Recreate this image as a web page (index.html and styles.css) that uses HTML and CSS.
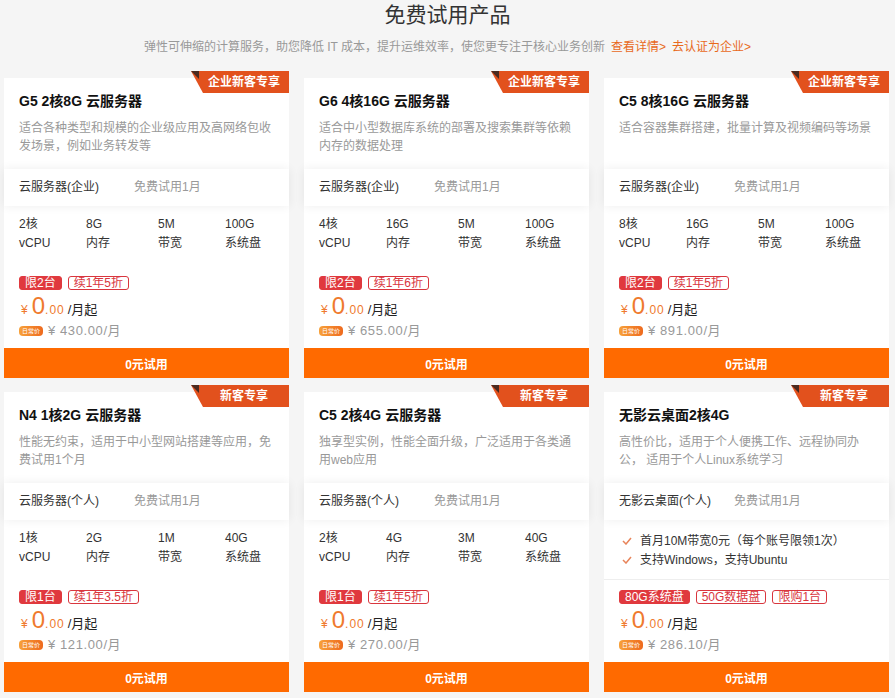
FILE: index.html
```html
<!DOCTYPE html>
<html lang="zh-CN">
<head>
  <meta charset="UTF-8" />
  <title>免费试用产品</title>
  <link rel="stylesheet" href="styles.css">
</head>
<body>
  <div class="header">
    <h1>免费试用产品</h1>
    <p class="subtitle">弹性可伸缩的计算服务，助您降低 IT 成本，提升运维效率，使您更专注于核心业务创新<a href="#">查看详情&gt;</a><a href="#">去认证为企业&gt;</a></p>
  </div>

  <div class="grid">
    <!-- row 1 -->
    <div class="card">
      <div class="badge">企业新客专享</div>
      <div class="card-head">
        <h3>G5 2核8G 云服务器</h3>
        <p class="desc">适合各种类型和规模的企业级应用及高网络包收发场景，例如业务转发等</p>
      </div>
      <div class="card-type"><span>云服务器(企业)</span><span class="trial">免费试用1月</span></div>
      <div class="card-body">
        <div class="specs">
          <span>2核</span><span>8G</span><span>5M</span><span>100G</span>
          <span>vCPU</span><span>内存</span><span>带宽</span><span>系统盘</span>
        </div>
      </div>
      <div class="card-foot">
        <div class="tags"><span class="tag fill">限2台</span><span class="tag">续1年5折</span></div>
        <div class="price"><span class="yen">¥</span><span class="num">0</span><span class="dec">.00</span><span class="unit">/月起</span></div>
        <div class="daily"><span class="daily-tag">日常价</span><span class="old">¥ 430.00/月</span></div>
        <button class="btn">0元试用</button>
      </div>
    </div>

    <div class="card">
      <div class="badge">企业新客专享</div>
      <div class="card-head">
        <h3>G6 4核16G 云服务器</h3>
        <p class="desc">适合中小型数据库系统的部署及搜索集群等依赖内存的数据处理</p>
      </div>
      <div class="card-type"><span>云服务器(企业)</span><span class="trial">免费试用1月</span></div>
      <div class="card-body">
        <div class="specs">
          <span>4核</span><span>16G</span><span>5M</span><span>100G</span>
          <span>vCPU</span><span>内存</span><span>带宽</span><span>系统盘</span>
        </div>
      </div>
      <div class="card-foot">
        <div class="tags"><span class="tag fill">限2台</span><span class="tag">续1年6折</span></div>
        <div class="price"><span class="yen">¥</span><span class="num">0</span><span class="dec">.00</span><span class="unit">/月起</span></div>
        <div class="daily"><span class="daily-tag">日常价</span><span class="old">¥ 655.00/月</span></div>
        <button class="btn">0元试用</button>
      </div>
    </div>

    <div class="card">
      <div class="badge">企业新客专享</div>
      <div class="card-head">
        <h3>C5 8核16G 云服务器</h3>
        <p class="desc">适合容器集群搭建，批量计算及视频编码等场景</p>
      </div>
      <div class="card-type"><span>云服务器(企业)</span><span class="trial">免费试用1月</span></div>
      <div class="card-body">
        <div class="specs">
          <span>8核</span><span>16G</span><span>5M</span><span>100G</span>
          <span>vCPU</span><span>内存</span><span>带宽</span><span>系统盘</span>
        </div>
      </div>
      <div class="card-foot">
        <div class="tags"><span class="tag fill">限2台</span><span class="tag">续1年5折</span></div>
        <div class="price"><span class="yen">¥</span><span class="num">0</span><span class="dec">.00</span><span class="unit">/月起</span></div>
        <div class="daily"><span class="daily-tag">日常价</span><span class="old">¥ 891.00/月</span></div>
        <button class="btn">0元试用</button>
      </div>
    </div>

    <!-- row 2 -->
    <div class="card">
      <div class="badge">新客专享</div>
      <div class="card-head">
        <h3>N4 1核2G 云服务器</h3>
        <p class="desc">性能无约束，适用于中小型网站搭建等应用，免费试用1个月</p>
      </div>
      <div class="card-type"><span>云服务器(个人)</span><span class="trial">免费试用1月</span></div>
      <div class="card-body">
        <div class="specs">
          <span>1核</span><span>2G</span><span>1M</span><span>40G</span>
          <span>vCPU</span><span>内存</span><span>带宽</span><span>系统盘</span>
        </div>
      </div>
      <div class="card-foot">
        <div class="tags"><span class="tag fill">限1台</span><span class="tag">续1年3.5折</span></div>
        <div class="price"><span class="yen">¥</span><span class="num">0</span><span class="dec">.00</span><span class="unit">/月起</span></div>
        <div class="daily"><span class="daily-tag">日常价</span><span class="old">¥ 121.00/月</span></div>
        <button class="btn">0元试用</button>
      </div>
    </div>

    <div class="card">
      <div class="badge">新客专享</div>
      <div class="card-head">
        <h3>C5 2核4G 云服务器</h3>
        <p class="desc">独享型实例，性能全面升级，广泛适用于各类通用web应用</p>
      </div>
      <div class="card-type"><span>云服务器(个人)</span><span class="trial">免费试用1月</span></div>
      <div class="card-body">
        <div class="specs">
          <span>2核</span><span>4G</span><span>3M</span><span>40G</span>
          <span>vCPU</span><span>内存</span><span>带宽</span><span>系统盘</span>
        </div>
      </div>
      <div class="card-foot">
        <div class="tags"><span class="tag fill">限1台</span><span class="tag">续1年5折</span></div>
        <div class="price"><span class="yen">¥</span><span class="num">0</span><span class="dec">.00</span><span class="unit">/月起</span></div>
        <div class="daily"><span class="daily-tag">日常价</span><span class="old">¥ 270.00/月</span></div>
        <button class="btn">0元试用</button>
      </div>
    </div>

    <div class="card">
      <div class="badge">新客专享</div>
      <div class="card-head">
        <h3>无影云桌面2核4G</h3>
        <p class="desc">高性价比，适用于个人便携工作、远程协同办公， 适用于个人Linux系统学习</p>
      </div>
      <div class="card-type"><span>无影云桌面(个人)</span><span class="trial">免费试用1月</span></div>
      <div class="card-body lined">
        <ul class="checks">
          <li><svg viewBox="0 0 10 8"><polyline points="1,4 4,7 9,1" /></svg>首月10M带宽0元（每个账号限领1次）</li>
          <li><svg viewBox="0 0 10 8"><polyline points="1,4 4,7 9,1" /></svg>支持Windows，支持Ubuntu</li>
        </ul>
      </div>
      <div class="card-foot">
        <div class="tags"><span class="tag fill">80G系统盘</span><span class="tag">50G数据盘</span><span class="tag">限购1台</span></div>
        <div class="price"><span class="yen">¥</span><span class="num">0</span><span class="dec">.00</span><span class="unit">/月起</span></div>
        <div class="daily"><span class="daily-tag">日常价</span><span class="old">¥ 286.10/月</span></div>
        <button class="btn">0元试用</button>
      </div>
    </div>
  </div>
</body>
</html>
```

FILE: styles.css
```css
* {
  box-sizing: border-box;
  margin: 0;
  padding: 0;
}

body {
  font-family: "Liberation Sans", "Noto Sans CJK SC", sans-serif;
  background: #f5f5f5;
  color: #333;
  font-size: 12px;
}

.header {
  text-align: center;
}

h1 {
  font-size: 21px;
  font-weight: normal;
  line-height: 30px;
  color: #333;
}

.subtitle {
  margin-top: 7px;
  line-height: 20px;
  color: #999;
}

.subtitle a {
  color: #e8691c;
  text-decoration: none;
  margin-left: 6px;
}

.grid {
  display: grid;
  grid-template-columns: repeat(3, 285px);
  column-gap: 15px;
  row-gap: 14px;
  padding: 21px 0 0 4px;
}

.card {
  position: relative;
  background: #fff;
  height: 300px;
  display: flex;
  flex-direction: column;
}

.badge {
  position: absolute;
  top: -7px;
  right: 0;
  width: 98px;
  height: 22px;
  line-height: 22px;
  padding-left: 8px;
  text-align: center;
  color: #fff;
  font-weight: bold;
  font-size: 12px;
  background: #e2511d;
  clip-path: polygon(0 0, 100% 0, 100% 100%, 12px 100%);
}

.badge::before {
  content: "";
  position: absolute;
  left: 0;
  top: 0;
  width: 8px;
  height: 8px;
  background: #4a2a20;
  clip-path: polygon(0 0, 100% 0, 100% 100%);
}

.card-head {
  height: 91px;
  padding: 14px 18px 0 15px;
}

.card-head h3 {
  font-size: 14px;
  line-height: 18px;
  color: #111;
}

.desc {
  margin-top: 9px;
  line-height: 18px;
  color: #999;
}

.card-type {
  height: 37px;
  line-height: 37px;
  padding-left: 15px;
  font-size: 12px;
  color: #333;
  background: #fff;
  box-shadow: 0 0 10px rgba(0, 0, 0, 0.07);
  position: relative;
}

.card-type .trial {
  position: absolute;
  left: 130px;
  color: #999;
}

.card-body {
  flex: 1;
  padding: 9px 0 0 15px;
}

.card-body.lined {
  border-bottom: 1px solid #eee;
  padding-top: 12px;
}

.specs {
  display: grid;
  grid-template-columns: 67px 72px 67px 1fr;
  line-height: 19px;
}

.checks {
  list-style: none;
  line-height: 19px;
}

.checks li svg {
  width: 10px;
  height: 8px;
  margin: 0 8px 0 3px;
  fill: none;
  stroke: #e8845a;
  stroke-width: 1.5;
}

.card-foot {
  padding-top: 10px;
}

.tags {
  display: flex;
  gap: 6px;
  padding-left: 15px;
}

.tag {
  height: 14px;
  line-height: 12px;
  padding: 0 5px;
  border: 1px solid #d9363e;
  border-radius: 3px;
  color: #d9363e;
}

.tag.fill {
  background: #e0393e;
  border-color: #e0393e;
  color: #fff;
}

.price {
  margin-top: 5px;
  height: 22px;
  line-height: 22px;
  padding-left: 17px;
  color: #ef7a2e;
}

.yen {
  font-size: 12px;
  margin-right: 4px;
}

.num {
  font-size: 24px;
}

.dec {
  font-size: 12px;
  letter-spacing: 1px;
}

.unit {
  font-size: 13px;
  color: #222;
  margin-left: 3px;
}

.daily {
  margin-top: 7px;
  height: 14px;
  line-height: 14px;
  padding-left: 15px;
  display: flex;
  align-items: center;
}

.daily-tag {
  width: 24px;
  height: 10px;
  line-height: 10px;
  border-radius: 4px;
  background: linear-gradient(90deg, #f7a13a, #ee6a1e);
  color: #fff;
  font-size: 6px;
  text-align: center;
}

.old {
  margin-left: 5px;
  font-size: 13px;
  letter-spacing: 0.6px;
  color: #999;
}

.btn {
  display: block;
  width: 100%;
  height: 30px;
  margin-top: 10px;
  border: none;
  background: #ff6a00;
  color: #fff;
  font-family: inherit;
  font-size: 12px;
  font-weight: bold;
  cursor: pointer;
}
```
